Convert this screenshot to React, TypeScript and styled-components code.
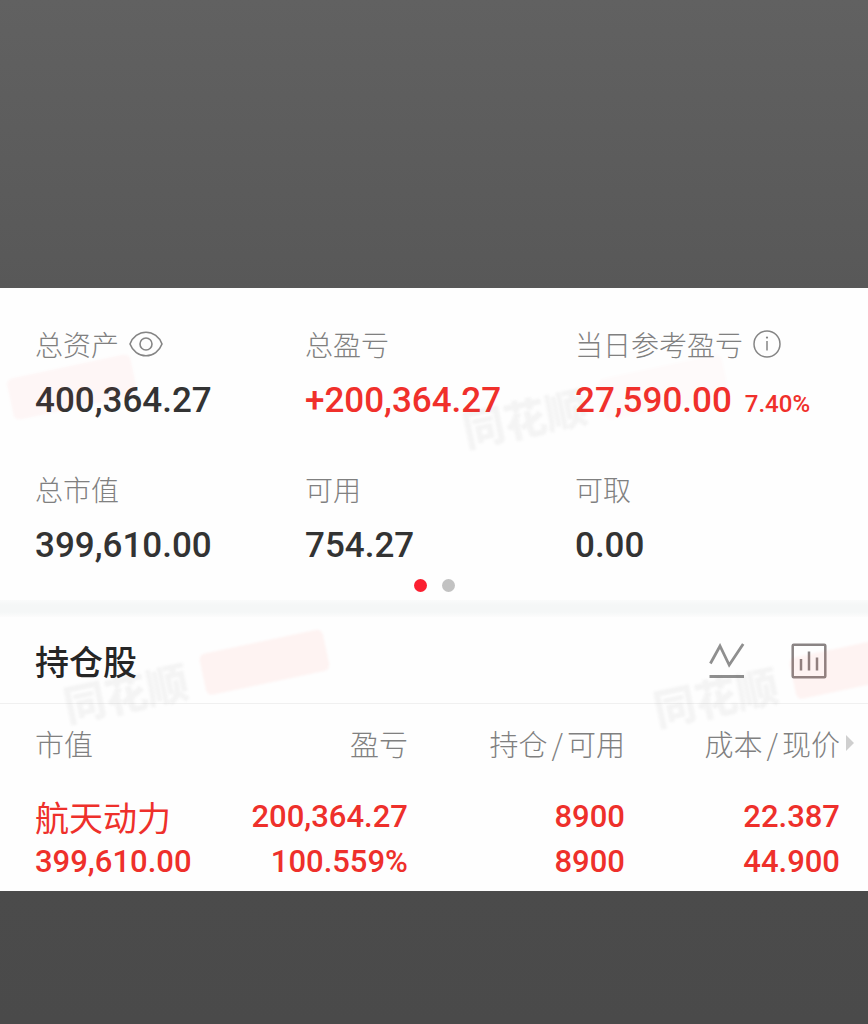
import React from 'react';
import styled, { createGlobalStyle } from 'styled-components';

const cjk = '"Noto Sans CJK SC", sans-serif';
const numeric = 'Roboto, "Noto Sans CJK SC", sans-serif';

const GlobalStyle = createGlobalStyle`
  * { box-sizing: border-box; }
  body { margin: 0; background: #4b4b4b; font-family: ${cjk}; }
`;

const Page = styled.div`
  display: flex;
  flex-direction: column;
  min-height: 100vh;
`;

const Shade = styled.div<{ $grow: number; $from: string; $to: string }>`
  flex: ${p => p.$grow} 0 0;
  background: linear-gradient(${p => p.$from}, ${p => p.$to});
`;

const Panel = styled.main`
  position: relative;
  overflow: hidden;
  background: #fefefe;
`;

const Summary = styled.dl`
  display: grid;
  grid-template-columns: 270fr 270fr 293fr;
  row-gap: 44px;
  margin: 0;
  padding: 36px 0 0 35px;
`;

const Metric = styled.div`
  display: flex;
  flex-direction: column;
  gap: 13px;
  white-space: nowrap;
`;

const MetricLabel = styled.dt`
  display: flex;
  align-items: center;
  gap: 10px;
  font-size: 28px;
  font-weight: 300;
  line-height: 40px;
  color: #808080;
`;

const MetricValue = styled.dd<{ $up?: boolean }>`
  display: flex;
  align-items: baseline;
  gap: 13px;
  margin: 0;
  font-family: ${numeric};
  font-size: 35px;
  font-weight: 500;
  line-height: 48px;
  color: ${p => (p.$up ? '#f0302b' : '#333333')};
`;

const Percent = styled.span`
  font-size: 24px;
  line-height: 24px;
`;

const IconButton = styled.button`
  display: flex;
  padding: 0;
  border: 0;
  background: none;
  color: #858585;
  cursor: pointer;
`;

const Pager = styled.div`
  display: flex;
  justify-content: center;
  gap: 15px;
  padding: 9px 0 8px;
`;

const PagerDot = styled.button<{ $active?: boolean }>`
  width: 13px;
  height: 13px;
  padding: 0;
  border: 0;
  border-radius: 50%;
  background: ${p => (p.$active ? '#fb1f30' : '#c2c2c2')};
`;

const Band = styled.div`
  height: 17px;
  background: linear-gradient(#fafbfb, #f5f7f7 30%, #f5f7f7 70%, #fcfcfc);
`;

const HoldingsHeader = styled.header`
  display: flex;
  align-items: center;
  gap: 46px;
  height: 87px;
  padding: 2px 41px 0 35px;
  border-bottom: 1px solid #f0f0f0;
`;

const Title = styled.h2`
  flex: 1;
  margin: 0;
  font-size: 34px;
  font-weight: 500;
  line-height: 48px;
  color: #262626;
`;

const Table = styled.table`
  width: 100%;
  table-layout: fixed;
  border-collapse: collapse;
  white-space: nowrap;
`;

const HeadCell = styled.th<{ $width: string }>`
  position: relative;
  width: ${p => p.$width};
  height: 78px;
  padding: 0;
  text-align: right;
  font-size: 29px;
  font-weight: 300;
  line-height: 40px;
  color: #808080;

  &:first-child { padding-left: 35px; text-align: left; }
  &:last-child { padding-right: 28px; }
`;

const Slash = styled.span`
  padding: 0 4px;
`;

const MoreArrow = styled.svg`
  position: absolute;
  right: 13px;
  top: 30px;
`;

const Cell = styled.td`
  padding: 12px 0 7px;
  text-align: right;
  font-family: ${numeric};
  font-size: 31px;
  font-weight: 500;
  line-height: 45px;
  color: #ee302b;

  &:first-child { padding-left: 35px; text-align: left; }
  &:last-child { padding-right: 28px; }
`;

const Line = styled.div`
  height: 45px;
`;

const StockName = styled.div`
  height: 45px;
  font-family: ${cjk};
  font-size: 34px;
  font-weight: 400;
`;

const Watermark = styled.div<{ $left: string; $top: string }>`
  position: absolute;
  left: ${p => p.$left};
  top: ${p => p.$top};
  display: flex;
  align-items: center;
  gap: 16px;
  transform: rotate(-12deg);
  font-size: 42px;
  font-weight: 900;
  line-height: 44px;
  color: rgba(90, 90, 90, 0.06);
  filter: blur(1px);
  white-space: nowrap;
  pointer-events: none;
`;

const WatermarkTag = styled.span<{ $strength: number }>`
  width: 126px;
  height: 42px;
  border-radius: 6px;
  background: rgba(250, 60, 50, ${p => p.$strength});
`;

const EyeIcon = () => (
  <svg width="34" height="26" viewBox="0 0 34 26" fill="none" stroke="currentColor" strokeWidth="1.6">
    <path d="M1 13C3.500 6 10 1.200 17 1.200S30.500 6 33 13C30.500 20 24 24.800 17 24.800S3.500 20 1 13Z" />
    <circle cx="17" cy="13" r="6" />
  </svg>
);

const InfoIcon = () => (
  <svg width="28" height="28" viewBox="0 0 28 28" fill="none" stroke="currentColor" strokeWidth="1.5">
    <circle cx="14" cy="14" r="13" />
    <path d="M14 11V20.500" />
    <circle cx="14" cy="7.600" r="1.100" fill="currentColor" stroke="none" />
  </svg>
);

const TrendIcon = () => (
  <svg width="36" height="36" viewBox="0 0 36 36" fill="none" stroke="#8f8f8f" strokeWidth="2.8">
    <path d="M1.4 20.500L11 3L20.2 22L34.2 1" />
    <path d="M0.500 33.500H35" />
  </svg>
);

const BarsIcon = () => (
  <svg width="36" height="36" viewBox="0 0 36 36" fill="none" stroke="#8a8484" strokeWidth="2.5">
    <rect x="1.700" y="1.700" width="32.600" height="32.600" rx="1" />
    <path d="M10 16V27.500M18 8.500V27.500M26 14.500V27.500" />
  </svg>
);

const watermarks = [
  { left: '1%', top: '78px', text: '', strength: 0.04 },
  { left: '53%', top: '92px', text: '同花顺', strength: 0.02 },
  { left: '7%', top: '367px', text: '同花顺', strength: 0.06 },
  { left: '75%', top: '371px', text: '同花顺', strength: 0.06 },
];

export default function App() {
  return (
    <Page>
      <GlobalStyle />
      <Shade $grow={288} $from="#616161" $to="#585858" />
      <Panel>
        {watermarks.map(w => (
          <Watermark key={w.left} $left={w.left} $top={w.top} aria-hidden="true">
            {w.text}
            <WatermarkTag $strength={w.strength} />
          </Watermark>
        ))}
        <Summary>
          <Metric>
            <MetricLabel>
              总资产
              <IconButton type="button" aria-label="显示或隐藏金额"><EyeIcon /></IconButton>
            </MetricLabel>
            <MetricValue>400,364.27</MetricValue>
          </Metric>
          <Metric>
            <MetricLabel>总盈亏</MetricLabel>
            <MetricValue $up>+200,364.27</MetricValue>
          </Metric>
          <Metric>
            <MetricLabel>
              当日参考盈亏
              <IconButton type="button" aria-label="说明"><InfoIcon /></IconButton>
            </MetricLabel>
            <MetricValue $up>
              27,590.00
              <Percent>7.40%</Percent>
            </MetricValue>
          </Metric>
          <Metric>
            <MetricLabel>总市值</MetricLabel>
            <MetricValue>399,610.00</MetricValue>
          </Metric>
          <Metric>
            <MetricLabel>可用</MetricLabel>
            <MetricValue>754.27</MetricValue>
          </Metric>
          <Metric>
            <MetricLabel>可取</MetricLabel>
            <MetricValue>0.00</MetricValue>
          </Metric>
        </Summary>
        <Pager>
          <PagerDot type="button" $active aria-label="第一页" />
          <PagerDot type="button" aria-label="第二页" />
        </Pager>
        <Band />
        <HoldingsHeader>
          <Title>持仓股</Title>
          <IconButton type="button" aria-label="走势"><TrendIcon /></IconButton>
          <IconButton type="button" aria-label="统计"><BarsIcon /></IconButton>
        </HoldingsHeader>
        <Table>
          <thead>
            <tr>
              <HeadCell scope="col" $width="26%">市值</HeadCell>
              <HeadCell scope="col" $width="21%">盈亏</HeadCell>
              <HeadCell scope="col" $width="25%">持仓<Slash>/</Slash>可用</HeadCell>
              <HeadCell scope="col" $width="28%">
                成本<Slash>/</Slash>现价
                <MoreArrow width="10" height="18" viewBox="0 0 10 18" aria-hidden="true">
                  <path d="M1 1L9 9L1 17Z" fill="#cfcfcf" />
                </MoreArrow>
              </HeadCell>
            </tr>
          </thead>
          <tbody>
            <tr>
              <Cell><StockName>航天动力</StockName><Line>399,610.00</Line></Cell>
              <Cell><Line>200,364.27</Line><Line>100.559%</Line></Cell>
              <Cell><Line>8900</Line><Line>8900</Line></Cell>
              <Cell><Line>22.387</Line><Line>44.900</Line></Cell>
            </tr>
          </tbody>
        </Table>
      </Panel>
      <Shade $grow={133} $from="#4b4b4b" $to="#4a4a4a" />
    </Page>
  );
}
